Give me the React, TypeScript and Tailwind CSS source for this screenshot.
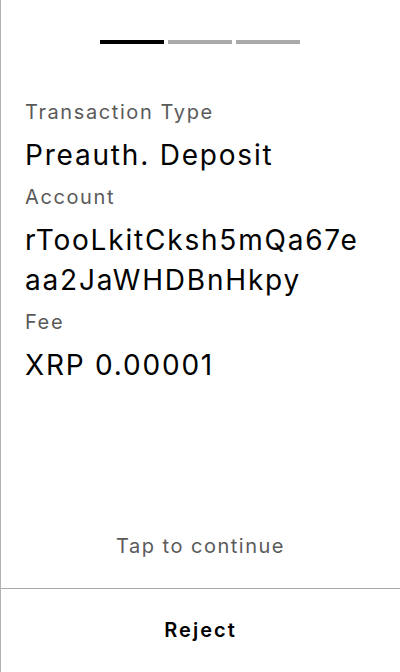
import React from "react";

const fields = [
  { label: "Transaction Type", value: "Preauth. Deposit" },
  { label: "Account", value: "rTooLkitCksh5mQa67eaa2JaWHDBnHkpy" },
  { label: "Fee", value: "XRP 0.00001" },
];

export default function App() {
  return (
    <div
      className="flex h-[672px] w-[400px] flex-col border-l border-[#b3b3b3] bg-white text-black"
      style={{ fontFamily: "Inter, 'Noto Sans', sans-serif" }}
    >
      {/* step indicator */}
      <div className="flex justify-center gap-1 pr-px pt-10">
        <div className="h-1 w-16 bg-black" />
        <div className="h-1 w-16 bg-[#aaaaaa]" />
        <div className="h-1 w-16 bg-[#aaaaaa]" />
      </div>

      <div className="mt-[54px] flex flex-col gap-2 px-6">
        {fields.map((f) => (
          <div key={f.label} className="flex flex-col gap-[9px]">
            <div className="text-[20px] leading-[28px] tracking-[1.6px] text-[#5a5a5a]">{f.label}</div>
            <div className="break-all text-[28px] leading-[40px] tracking-[1.8px]">{f.value}</div>
          </div>
        ))}
      </div>

      <div className="mt-auto pb-[28px] text-center text-[20px] leading-[28px] tracking-[1.5px] text-[#5a5a5a]">
        Tap to continue
      </div>
      <button
        type="button"
        className="h-[84px] border-t border-[#aaaaaa] pb-[2px] text-center text-[20px] font-semibold leading-[28px] tracking-[2px]"
      >
        Reject
      </button>
    </div>
  );
}
